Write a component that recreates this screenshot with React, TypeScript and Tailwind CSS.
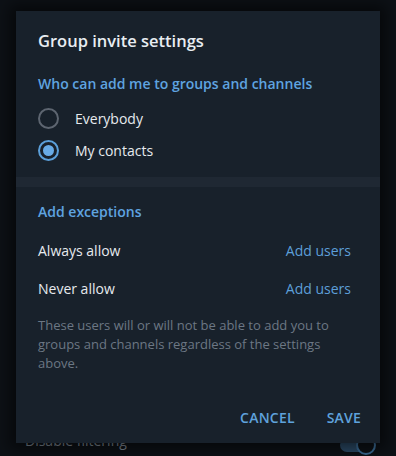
import React, { useState } from "react";

type Option = "everybody" | "contacts";

// Radio circle, drawn with borders
const Radio: React.FC<{ checked: boolean }> = ({ checked }) => (
  <span
    className={`flex items-center justify-center w-[21px] h-[21px] rounded-full border-2 ${
      checked ? "border-[#5b9fd9]" : "border-[#5d6570]"
    }`}
  >
    {checked && <span className="block w-[11px] h-[11px] rounded-full bg-[#68abe6]" />}
  </span>
);

const App: React.FC = () => {
  const [choice, setChoice] = useState<Option>("contacts");

  const options: { id: Option; label: string }[] = [
    { id: "everybody", label: "Everybody" },
    { id: "contacts", label: "My contacts" },
  ];

  return (
    <div
      className="relative w-[396px] h-[456px] overflow-hidden bg-[#0d1116] pt-[11px] pl-[16px]"
      style={{ fontFamily: '"Open Sans", "Noto Sans", sans-serif' }}
    >
      {/* Settings page behind the overlay */}
      <div className="absolute left-[25px] bottom-[5px] text-[14px] leading-[20px] text-[#7b8590]">Disable filtering</div>
      <div className="absolute right-[22px] bottom-[4px] w-[34px] h-[14px] rounded-full bg-[#2b4a66]">
        <span className="absolute right-[-2px] top-[-3px] w-[20px] h-[20px] rounded-full border-2 border-[#3b6c96] bg-[#0d1116]" />
      </div>

      {/* Dialog */}
      <div className="relative w-[364px] h-[432px] bg-[#18212b] shadow-[0_0_14px_6px_rgba(0,0,0,0.55)] flex flex-col">
        <div className="px-[22px] pt-[18px]">
          <h2 className="text-[16.5px] leading-[24px] font-semibold text-[#e8edf2]">Group invite settings</h2>
          <p className="mt-[21px] text-[14px] leading-[20px] font-semibold text-[#5fa4e0]">
            Who can add me to groups and channels
          </p>
          <div className="mt-[8px] flex flex-col">
            {options.map((o) => (
              <button
                key={o.id}
                onClick={() => setChoice(o.id)}
                className="flex items-center h-[32px] text-left"
              >
                <Radio checked={choice === o.id} />
                <span className="ml-[16px] text-[14px] text-[#e6eaee]">{o.label}</span>
              </button>
            ))}
          </div>
        </div>

        <div className="mt-[11px] h-[10px] bg-[#1f2833]" />

        <div className="pl-[22px] pr-[29px]">
          <p className="mt-[15px] text-[14px] leading-[20px] font-semibold text-[#5fa4e0]">Add exceptions</p>
          <div className="mt-[9px] flex items-center justify-between h-[38px]">
            <span className="text-[14px] text-[#e6eaee]">Always allow</span>
            <span className="text-[14px] text-[#5d9fd8]">Add users</span>
          </div>
          <div className="flex items-center justify-between h-[38px]">
            <span className="text-[14px] text-[#e6eaee]">Never allow</span>
            <span className="text-[14px] text-[#5d9fd8]">Add users</span>
          </div>
          <p className="mt-[9px] pr-[4px] text-[13px] leading-[19px] text-[#6c7784]">
            These users will or will not be able to add you to groups and channels regardless of the settings above.
          </p>
        </div>

        <div className="mt-auto flex justify-end items-center gap-[32px] pr-[19px] pb-[15px]">
          <button className="text-[14px] font-semibold text-[#5fa2dc] tracking-[0.2px]">CANCEL</button>
          <button className="text-[14px] font-semibold text-[#5fa2dc] tracking-[0.2px]">SAVE</button>
        </div>
      </div>
    </div>
  );
};

export default App;
